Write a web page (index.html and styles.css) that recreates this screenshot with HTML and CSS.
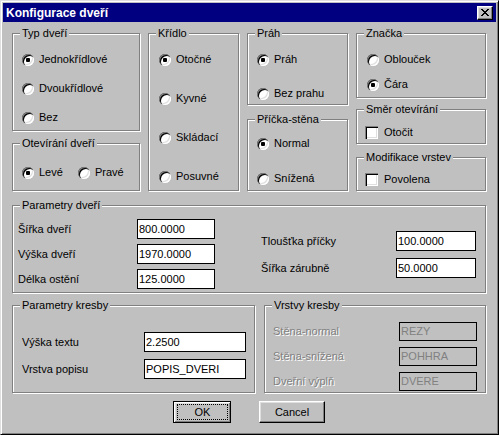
FILE: index.html
```html
<!DOCTYPE html>
<html lang="cs">
<head>
<meta charset="utf-8">
<title>Konfigurace dveří</title>
<link rel="stylesheet" href="styles.css">
</head>
<body>
<div class="window">
  <div class="titlebar">
    <span class="title">Konfigurace dveří</span>
    <span class="close"><svg width="8" height="7" viewBox="0 0 8 7" shape-rendering="crispEdges"><path fill="#000" d="M0 0h2v1H0zM6 0h2v1H6zM1 1h2v1H1zM5 1h2v1H5zM2 2h4v1H2zM3 3h2v1H3zM2 4h4v1H2zM1 5h2v1H1zM5 5h2v1H5zM0 6h2v1H0zM6 6h2v1H6z"/></svg></span>
  </div>
  <div class="client">
    <div class="top">
      <div class="col col-split">
        <div class="group g-typ">
          <div class="legend">Typ dveří</div>
          <div class="body b-typ">
            <div class="opt"><span class="radio on"></span><span>Jednokřídlové</span></div>
            <div class="opt"><span class="radio"></span><span>Dvoukřídlové</span></div>
            <div class="opt"><span class="radio"></span><span>Bez</span></div>
          </div>
        </div>
        <div class="group g-otev">
          <div class="legend">Otevírání dveří</div>
          <div class="body b-otev">
            <div class="opt opt-fixed"><span class="radio on"></span><span>Levé</span></div>
            <div class="opt"><span class="radio"></span><span>Pravé</span></div>
          </div>
        </div>
      </div>
      <div class="col">
        <div class="group g-kridlo">
          <div class="legend">Křídlo</div>
          <div class="body b-kridlo">
            <div class="opt"><span class="radio on"></span><span>Otočné</span></div>
            <div class="opt"><span class="radio"></span><span>Kyvné</span></div>
            <div class="opt"><span class="radio"></span><span>Skládací</span></div>
            <div class="opt"><span class="radio"></span><span>Posuvné</span></div>
          </div>
        </div>
      </div>
      <div class="col col-split">
        <div class="group g-prah">
          <div class="legend">Práh</div>
          <div class="body b-prah">
            <div class="opt"><span class="radio on"></span><span>Práh</span></div>
            <div class="opt"><span class="radio"></span><span>Bez prahu</span></div>
          </div>
        </div>
        <div class="group g-pricka">
          <div class="legend">Příčka-stěna</div>
          <div class="body b-pricka">
            <div class="opt"><span class="radio on"></span><span>Normal</span></div>
            <div class="opt"><span class="radio"></span><span>Snížená</span></div>
          </div>
        </div>
      </div>
      <div class="col">
        <div class="group g-znacka">
          <div class="legend">Značka</div>
          <div class="body b-znacka">
            <div class="opt"><span class="radio"></span><span>Oblouček</span></div>
            <div class="opt"><span class="radio on"></span><span>Čára</span></div>
          </div>
        </div>
        <div class="group g-smer">
          <div class="legend">Směr otevírání</div>
          <div class="body b-smer">
            <div class="opt opt-check"><span class="check"></span><span>Otočit</span></div>
          </div>
        </div>
        <div class="group g-modif">
          <div class="legend">Modifikace vrstev</div>
          <div class="body b-modif">
            <div class="opt opt-check"><span class="check"></span><span>Povolena</span></div>
          </div>
        </div>
      </div>
    </div>

    <div class="group g-params">
      <div class="legend">Parametry dveří</div>
      <div class="body b-params">
        <div class="fields f-left">
          <div class="field"><span class="lbl">Šířka dveří</span><span class="edit">800.0000</span></div>
          <div class="field"><span class="lbl">Výška dveří</span><span class="edit">1970.0000</span></div>
          <div class="field"><span class="lbl">Délka ostění</span><span class="edit">125.0000</span></div>
        </div>
        <div class="fields f-right">
          <div class="field"><span class="lbl">Tloušťka příčky</span><span class="edit">100.0000</span></div>
          <div class="field"><span class="lbl">Šířka zárubně</span><span class="edit">50.0000</span></div>
        </div>
      </div>
    </div>

    <div class="bottom">
      <div class="group g-kresba">
        <div class="legend">Parametry kresby</div>
        <div class="body b-kresba">
          <div class="field"><span class="lbl">Výška textu</span><span class="edit">2.2500</span></div>
          <div class="field"><span class="lbl">Vrstva popisu</span><span class="edit">POPIS_DVERI</span></div>
        </div>
      </div>
      <div class="group g-vrstvy">
        <div class="legend">Vrstvy kresby</div>
        <div class="body b-vrstvy">
          <div class="field"><span class="lbl disabled">Stěna-normal</span><span class="edit edit-dis">REZY</span></div>
          <div class="field"><span class="lbl disabled">Stěna-snížená</span><span class="edit edit-dis">POHHRA</span></div>
          <div class="field"><span class="lbl disabled">Dveřní výplň</span><span class="edit edit-dis">DVERE</span></div>
        </div>
      </div>
    </div>

    <div class="buttons">
      <div class="btn btn-default"><span class="focus">OK</span></div>
      <div class="btn btn-cancel">Cancel</div>
    </div>
  </div>
</div>
</body>
</html>
```

FILE: styles.css
```css
* { box-sizing: border-box; }
html, body { margin: 0; padding: 0; }
body {
  width: 499px;
  height: 435px;
  overflow: hidden;
  background: #c0c0c0;
  font-family: "Liberation Sans", Arial, sans-serif;
  font-size: 11px;
  color: #000;
}

.window {
  width: 499px;
  height: 435px;
  background: #c0c0c0;
  border: 1px solid;
  border-color: #dfdfdf #000 #000 #dfdfdf;
  box-shadow: inset 1px 1px 0 #fff, inset -1px -1px 0 #808080;
  padding: 2px;
  display: flex;
  flex-direction: column;
}

.titlebar {
  height: 19px;
  flex: none;
  background: #000080;
  color: #fff;
  display: flex;
  align-items: center;
  justify-content: space-between;
  padding: 0 3px 0 3px;
}
.title {
  font-weight: bold;
  font-size: 12px;
  line-height: 19px;
  padding-top: 1px;
}
.close {
  width: 16px;
  height: 14px;
  background: #c0c0c0;
  border: 1px solid;
  border-color: #fff #000 #000 #fff;
  box-shadow: inset -1px -1px 0 #808080, inset 1px 1px 0 #dfdfdf;
  display: flex;
  align-items: center;
  justify-content: center;
}
.close svg { display: block; }

.client {
  flex: 1;
  padding: 11px 10px 0 9px;
  display: flex;
  flex-direction: column;
}

.top {
  display: grid;
  grid-template-columns: 128px 91px 101px 130px;
  column-gap: 8px;
  height: 158px;
}
.col { display: flex; flex-direction: column; }
.col-split { justify-content: space-between; }

.group {
  border: 1px solid #808080;
  box-shadow: inset 1px 1px 0 #fff, 1px 1px 0 #fff;
}
.legend {
  width: fit-content;
  height: 13px;
  line-height: 13px;
  margin: -7px 0 0 7px;
  padding: 0 2px;
  background: #c0c0c0;
  white-space: nowrap;
}
.body { display: flex; flex-direction: column; }

.opt {
  display: flex;
  align-items: center;
  height: 13px;
  gap: 5px;
  line-height: 13px;
  white-space: nowrap;
}
.opt-check { gap: 6px; }

.radio {
  flex: none;
  width: 12px;
  height: 12px;
  border-radius: 50%;
  background: #fff;
  box-shadow:
    inset 1px 1px 0 #808080,
    inset 2px 2px 0 #000,
    inset -1px -1px 0 #fff,
    inset -2px -2px 0 #dfdfdf;
  display: flex;
  align-items: center;
  justify-content: center;
}
.radio.on::after {
  content: "";
  width: 4px;
  height: 4px;
  border-radius: 1px;
  background: #000;
}

.check {
  flex: none;
  width: 13px;
  height: 13px;
  background: #fff;
  box-shadow:
    inset 1px 1px 0 #808080,
    inset 2px 2px 0 #000,
    inset -1px -1px 0 #fff,
    inset -2px -2px 0 #dfdfdf;
}

/* top groups */
.g-typ { height: 98px; }
.b-typ { padding: 13px 0 0 9px; gap: 16px; }

.g-otev { height: 48px; }
.b-otev { padding: 16px 0 0 9px; flex-direction: row; }
.opt-fixed { width: 56px; }

.g-kridlo { height: 158px; }
.b-kridlo { padding: 13px 0 0 10px; gap: 26px; }

.g-prah { height: 72px; }
.b-prah { padding: 13px 0 0 9px; gap: 21px; }

.g-pricka { height: 72px; }
.b-pricka { padding: 11px 0 0 9px; gap: 22px; }

.g-znacka { height: 65px; }
.b-znacka { padding: 13px 0 0 10px; gap: 12px; }

.g-smer { height: 35px; margin-top: 11px; }
.b-smer { padding: 10px 0 0 8px; }

.g-modif { height: 34px; margin-top: 13px; }
.b-modif { padding: 9px 0 0 8px; }

/* fields */
.field {
  display: flex;
  align-items: center;
  height: 20px;
  white-space: nowrap;
}
.lbl { flex: none; line-height: 13px; }
.edit {
  flex: none;
  height: 20px;
  line-height: 18px;
  padding-left: 1px;
  background: #fff;
  border: 1px solid #000;
  white-space: nowrap;
  overflow: hidden;
}
.disabled {
  color: #808080;
  text-shadow: 1px 1px 0 #fff;
}
.edit-dis {
  background: #c0c0c0;
  color: #808080;
  height: 19px;
  line-height: 17px;
}

.g-params { height: 88px; margin-top: 14px; }
.b-params { flex-direction: row; padding-left: 5px; column-gap: 46px; }
.fields { display: flex; flex-direction: column; }
.f-left { padding-top: 7px; gap: 5px; }
.f-left .lbl { width: 119px; }
.f-left .edit { width: 78px; }
.f-right { padding-top: 19px; gap: 7px; }
.f-right .lbl { width: 135px; }
.f-right .edit { width: 80px; }

.bottom {
  display: grid;
  grid-template-columns: 243px 222px;
  column-gap: 9px;
  height: 88px;
  margin-top: 12px;
}
.b-kresba { padding: 20px 0 0 9px; gap: 7px; }
.b-kresba .lbl { width: 122px; }
.b-kresba .edit { width: 102px; }

.b-vrstvy { padding: 10px 0 0 8px; gap: 6px; }
.b-vrstvy .field { height: 19px; }
.b-vrstvy .lbl { width: 126px; }
.b-vrstvy .edit { width: 78px; }

/* buttons */
.buttons {
  display: flex;
  justify-content: center;
  gap: 28px;
  margin-top: 8px;
}
.btn {
  height: 22px;
  display: flex;
  align-items: stretch;
  justify-content: center;
  line-height: 13px;
}
.btn-default {
  width: 58px;
  border: 1px solid #000;
  box-shadow: inset 1px 1px 0 #fff, inset -1px -1px 0 #808080, inset 2px 2px 0 #dfdfdf;
  padding: 2px 2px 2px 3px;
}
.focus {
  flex: 1;
  border: 1px dotted #000;
  display: flex;
  align-items: center;
  justify-content: center;
}
.btn-cancel {
  width: 66px;
  border: 1px solid;
  border-color: #fff #000 #000 #fff;
  box-shadow: inset -1px -1px 0 #808080, inset 1px 1px 0 #dfdfdf;
  align-items: center;
}
```
